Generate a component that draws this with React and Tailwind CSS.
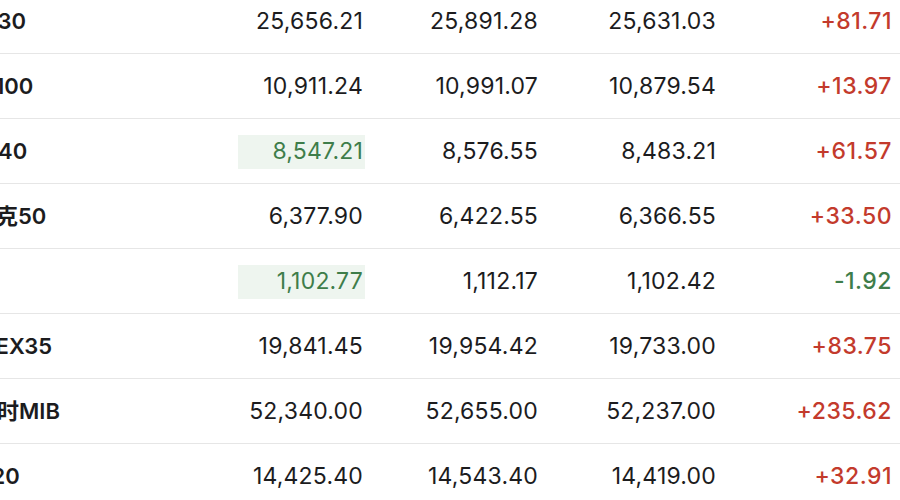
const rows = [
  { name: "德国DAX30", shift: "-ml-[93px]", last: "25,656.21", high: "25,891.28", low: "25,631.03", chg: "+81.71" },
  { name: "英国富时100", shift: "-ml-[93px]", last: "10,911.24", high: "10,991.07", low: "10,879.54", chg: "+13.97" },
  { name: "法国CAC40", shift: "-ml-[93px]", last: "8,547.21", high: "8,576.55", low: "8,483.21", chg: "+61.57", flash: true },
  { name: "欧洲斯托克50", shift: "-ml-[92px]", last: "6,377.90", high: "6,422.55", low: "6,366.55", chg: "+33.50" },
  { name: "荷兰AEX", shift: "-ml-[100px]", last: "1,102.77", high: "1,112.17", low: "1,102.42", chg: "-1.92", flash: true },
  { name: "西班牙IBEX35", shift: "-ml-[91px]", last: "19,841.45", high: "19,954.42", low: "19,733.00", chg: "+83.75" },
  { name: "意大利富时MIB", shift: "-ml-[91px]", last: "52,340.00", high: "52,655.00", low: "52,237.00", chg: "+235.62" },
  { name: "葡萄牙PSI20", shift: "-ml-[109px]", last: "14,425.40", high: "14,543.40", low: "14,419.00", chg: "+32.91" },
];

const App = () => {
  return (
    <div
      className="w-[900px] h-[500px] overflow-hidden bg-white text-[#1c1c1e]"
      style={{ fontFamily: '"Inter", "Noto Sans CJK SC", sans-serif' }}
    >
      <div className="-mt-[11px]">
        {rows.map((r) => (
          <div key={r.name} className="flex items-center h-[65px] pt-[1px] border-b border-[#e6e6e6] text-[23px] tracking-[0.2px]">
            {/* name column, cut by the left edge */}
            <div className="w-[238px] h-full overflow-hidden flex items-center text-[22px] tracking-normal">
              <span className={`${r.shift} font-semibold whitespace-nowrap`}>{r.name}</span>
            </div>
            <div className="w-[127px] flex justify-end">
              <span
                className={`w-full h-[34px] flex items-center justify-end pr-[2px] ${
                  r.flash ? "bg-[#eef5ef] text-[#3e7d4a]" : ""
                }`}
              >
                {r.last}
              </span>
            </div>
            <div className="w-[175px] text-right pr-[2px]">{r.high}</div>
            <div className="w-[178px] text-right pr-[2px]">{r.low}</div>
            <div
              className={`w-[176px] text-right pr-[2px] font-medium tracking-[0.5px] ${
                r.chg.startsWith("-") ? "text-[#3e7d4a]" : "text-[#c33a2c]"
              }`}
            >
              {r.chg}
            </div>
          </div>
        ))}
      </div>
    </div>
  );
};

export default App;
